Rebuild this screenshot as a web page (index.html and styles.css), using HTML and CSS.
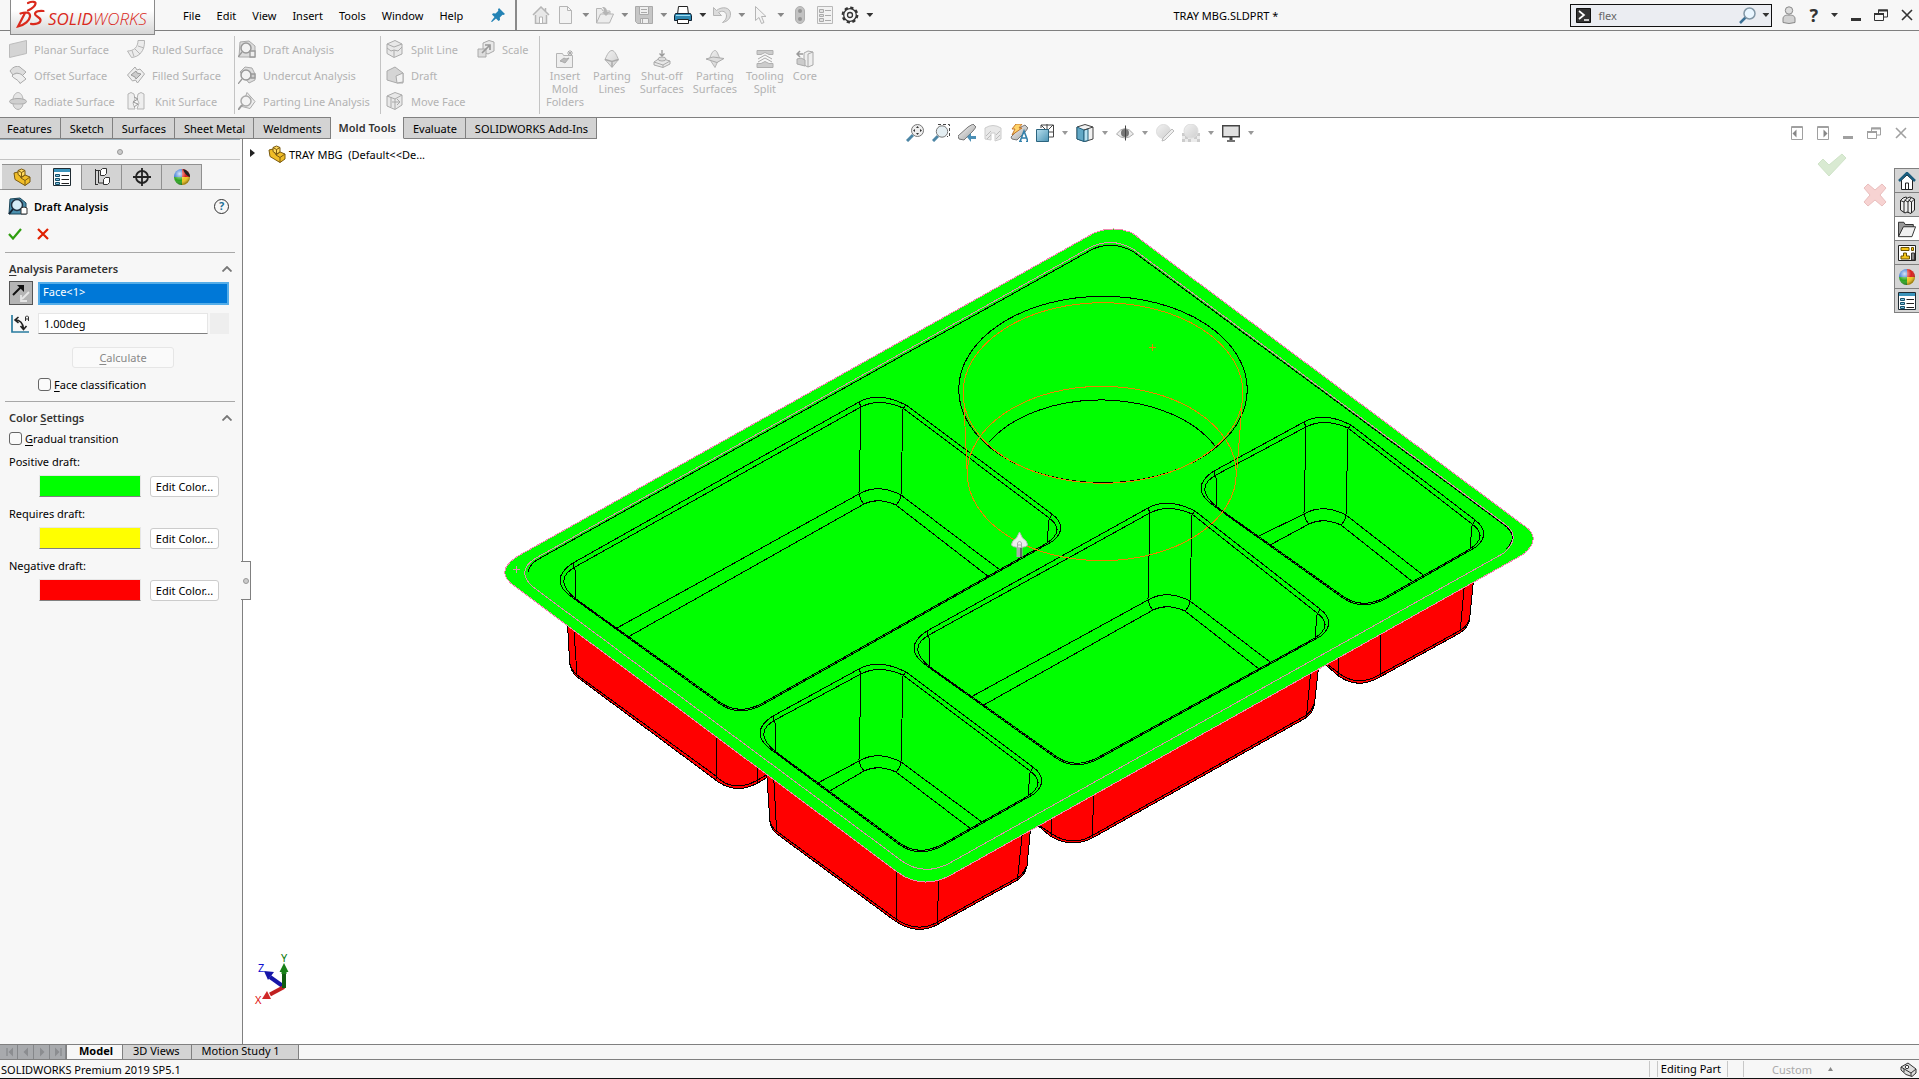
FILE: index.html
```html
<!DOCTYPE html>
<html lang="en">
<head>
  <meta charset="UTF-8">
  <meta name="viewport" content="width=device-width, initial-scale=1.0">
  <title>TRAY MBG.SLDPRT *</title>
  <link rel="stylesheet" href="styles.css">
</head>
<body>

<svg class="defs" aria-hidden="true">
  <defs>
    <linearGradient id="steel" x1="0" y1="0" x2="1" y2="1"><stop offset="0" stop-color="#fff"/><stop offset="1" stop-color="#9a9a9a"/></linearGradient>
    <linearGradient id="blue" x1="0" y1="0" x2="1" y2="1"><stop offset="0" stop-color="#b9e0f0"/><stop offset="1" stop-color="#4d94b4"/></linearGradient>
    <linearGradient id="pale" x1="0" y1="0" x2="1" y2="1"><stop offset="0" stop-color="#f2f2f2"/><stop offset="1" stop-color="#cfcfcf"/></linearGradient>
    <radialGradient id="shine" cx=".35" cy=".3" r=".7"><stop offset="0" stop-color="#fff" stop-opacity=".8"/><stop offset=".6" stop-color="#fff" stop-opacity="0"/><stop offset="1" stop-color="#000" stop-opacity=".35"/></radialGradient>
  </defs>
  <symbol id="part" viewBox="0 0 18 18">
    <path d="M1 5l4-1 3 6 4-3 5 2v5l-5 3.500-10-6z" fill="#f0bd27" stroke="#7a5a10"/>
    <path d="M5 2.500L8.500 1 12 2.500V7L8.500 9 5 6.500z" fill="#ffd95c" stroke="#7a5a10"/>
    <path d="M5 2.500l3.500 2L12 2.500M8.500 4.500V9M8 10l4 2.500L17 9M12 12.500v5" fill="none" stroke="#7a5a10"/>
  </symbol>
  <symbol id="ball" viewBox="0 0 18 18">
    <path d="M9 9V1a8 8 0 0 1 8 8z" fill="#d8201c"/><path d="M9 9H1a8 8 0 0 1 8-8z" fill="#2f72d4"/>
    <path d="M9 9v8a8 8 0 0 1-8-8z" fill="#2da521"/><path d="M9 9h8a8 8 0 0 1-8 8z" fill="#f2c51e"/>
    <circle cx="9" cy="9" r="8" fill="url(#shine)"/>
  </symbol>
  <symbol id="list" viewBox="0 0 18 18">
    <path d="M.5.500h17v17H.5z" fill="#fff" stroke="#1f2b33"/><path d="M1 1h16v3H1z" fill="#3b94bb"/>
    <path d="M2.500 6.500h4v2h-4zM2.500 10.500h4v2h-4zM2.500 14.500h4v2h-4z" fill="#7ec3df" stroke="#16506b"/><path d="M8.500 7.500H16M8.500 11.500H16M8.500 15.500H16" stroke="#222"/>
  </symbol>
  <symbol id="restore" viewBox="0 0 14 12">
    <path d="M4.500 4V1h9v7H10" fill="none" stroke="currentColor"/><path d="M4 1.500h10" stroke="currentColor" stroke-width="2"/>
    <path d="M.5 4.500h9v7h-9z" fill="none" stroke="currentColor"/><path d="M0 5h10" stroke="currentColor" stroke-width="2"/>
  </symbol>
  <symbol id="close" viewBox="0 0 12 12"><path d="M1 1l10 10M11 1L1 11" stroke="currentColor" stroke-width="1.600"/></symbol>
</svg>

<header class="titlebar">
  <div class="logo">
    <svg class="ds" viewBox="0 0 30 28"><g fill="none" stroke="#da291c" stroke-width="2.200" stroke-linecap="round"><path d="M12 3c4-2 8-1.500 7.500.8-.5 2.500-4 5-7.500 6.700"/><path d="M4.500 13.500c6-2 10-1 9.500 3C13.500 20.500 9 25 2 26.500L9 13"/><path d="M27.500 11c-4-.5-8.500.3-8.500 3s6 3 5.500 6.500c-.5 3-5 4-9.500 3.300"/></g></svg>
    <span class="word"><b>SOLID</b>WORKS</span>
  </div>
  <nav class="menu">
    <button>File</button><button>Edit</button><button>View</button><button>Insert</button><button>Tools</button><button>Window</button><button>Help</button>
  </nav>
  <svg class="pin" viewBox="0 0 14 14"><path d="M8 0l6 6-1.500 1-1-.3-2.700 2.800.2 2.500-1.500 1L5 10.500 1 14l-1-.5L3.500 9 1 6.500l1-1.200 2.600.2 2.700-2.700L7 1.500z" fill="#2483b5"/></svg>
  <div class="quickbar">
    <button aria-label="Home"><svg viewBox="0 0 18 18"><path d="M3.500 9v8.500h11V9M1 9l8-8 8 8M13.500 5V2" fill="#e8e8e8" stroke="#b5b5b5" stroke-width="1.500"/><path d="M7.500 17v-6h3v6" fill="#fff" stroke="#b5b5b5"/></svg></button>
    <button aria-label="New"><svg viewBox="0 0 18 18"><path d="M2.500.5h8l4 4v13h-12zM10.500.5v4h4" fill="#f3f3f3" stroke="#b5b5b5"/></svg></button><i class="caret dim"></i>
    <button aria-label="Open"><svg viewBox="0 0 18 18"><path d="M.5 17V2.500h5L7 5h7v3M.5 17l4-9h13l-4 9z" fill="#ececec" stroke="#b5b5b5"/><path d="M6 1c4 0 5 2 5 5h3l-4 4-4-4h2c0-2 0-3-2-5z" fill="#b5b5b5"/></svg></button><i class="caret dim"></i>
    <button aria-label="Save"><svg viewBox="0 0 18 18"><path d="M.5.500h17v17h-15l-2-2z" fill="#c6c6c6" stroke="#aaa"/><path d="M4.500.5h9v8h-9zM5.500 12.500h8v5h-8z" fill="#efefef" stroke="#aaa"/><path d="M6 3.500h6M6 6.500h6M7.500 13v4" stroke="#aaa"/></svg></button><i class="caret dim"></i>
    <button aria-label="Print"><svg viewBox="0 0 18 18"><path d="M4.500.5h9l1 8h-11z" fill="#fff" stroke="#222"/><path d="M1.500 7.500h15l1 2v5H.5v-5z" fill="#2d87b0" stroke="#123"/><path d="M2 9.500h14" stroke="#9ddcf3"/><path d="M3.500 13.500h11v4h-11z" fill="#fff" stroke="#222"/></svg></button><i class="caret"></i>
    <button aria-label="Undo"><svg viewBox="0 0 18 18"><path d="M.5 1.500v8h8l-3-3c4-2.500 8-1 8 3.500 0 3-2 5-4 6.500 5-1 8-4 8-8.500C17.500 1 9 0 3.500 4.500z" fill="#dcdcdc" stroke="#b5b5b5"/></svg></button><i class="caret dim"></i>
    <button aria-label="Select"><svg viewBox="0 0 18 18"><path d="M3.500.5v14l3.500-3 2.500 6 2.500-1-2.500-6H14z" fill="#f4f4f4" stroke="#b5b5b5"/></svg></button><i class="caret dim"></i>
    <button aria-label="Rebuild"><svg viewBox="0 0 18 18"><rect x="4.500" y=".5" width="9" height="17" rx="4.500" fill="#c2c2c2" stroke="#b0b0b0"/><circle cx="9" cy="5" r="2" fill="#949494"/><circle cx="9" cy="13" r="2" fill="#949494"/></svg></button>
    <button aria-label="File properties"><svg viewBox="0 0 18 18"><path d="M1.500.5h15v17h-15z" fill="#f2f2f2" stroke="#b8b8b8"/><path d="M3.500 3.500h4v3h-4zM3.500 8.500h4v2h-4zM3.500 12.500h4v3h-4z" fill="#e0e0e0" stroke="#aaa"/><path d="M9 4.500h6M9 9.500h6M9 14.500h6" stroke="#aaa"/></svg></button>
    <button aria-label="Options"><svg viewBox="0 0 18 18"><circle cx="9" cy="9" r="7.200" fill="none" stroke="#333" stroke-width="2.400" stroke-dasharray="3.200 2.450"/><circle cx="9" cy="9" r="6.300" fill="#f7f7f7" stroke="#333" stroke-width="1.300"/><circle cx="9" cy="9" r="2.500" fill="none" stroke="#333" stroke-width="1.300"/></svg></button><i class="caret"></i>
  </div>
  <div class="doc-title">TRAY MBG.SLDPRT *</div>
  <label class="search">
    <svg viewBox="0 0 15 15"><path d="M.5.500h14v14H.5z" fill="#333" stroke="#111"/><path d="M3 3l5 4-5 4M8 12h5" fill="none" stroke="#fff" stroke-width="1.700"/></svg>
    <input type="text" value="flex" aria-label="Search">
    <svg class="glass" viewBox="0 0 17 17"><path d="M1 16l6-6" stroke="#3b7196" stroke-width="2.500"/><circle cx="10.500" cy="6.500" r="5.500" fill="#eaf6ff" stroke="#8297a6" stroke-width="1.500"/></svg>
    <i class="caret"></i>
  </label>
  <div class="window-controls">
    <button aria-label="Login"><svg class="user" viewBox="0 0 14 18"><path d="M1 16.500V13c0-3 2-4 6-4s6 1 6 4v3.500q-6 2-12 0z" fill="#d2d2d2" stroke="#888"/><circle cx="7" cy="4.500" r="3.700" fill="#ddd" stroke="#888"/></svg></button>
    <button class="help">?</button><i class="caret"></i>
    <button aria-label="Minimize"><span class="min"></span></button>
    <button aria-label="Restore"><svg class="restore"><use href="#restore"/></svg></button>
    <button aria-label="Close"><svg class="close"><use href="#close"/></svg></button>
  </div>
</header>

<section class="ribbon">
  <div class="col col-a">
    <button disabled><svg viewBox="0 0 18 18"><path d="M.5 4.500l17-4v13l-17 4z" fill="#d4d4d4" stroke="#bbb"/></svg>Planar Surface</button>
    <button disabled><svg viewBox="0 0 18 18"><path d="M1 5c3-5 9-6 11-3l5 4-4 4C10 6 5 7 4 9z" fill="#ddd" stroke="#aaa"/><path d="M3 10c3-4 9-3 11 0l3 3-6 4.500C9 13 5 13 3 10z" fill="#eee" stroke="#aaa"/></svg>Offset Surface</button>
    <button disabled><svg viewBox="0 0 18 18"><path d="M4 8c0-5 3-7.500 5-7.500S14 3 14 8z" fill="#e5e5e5" stroke="#b5b5b5"/><ellipse cx="9" cy="9.500" rx="8.500" ry="3" fill="#cfcfcf" stroke="#aaa"/><path d="M4 12c0 3 3 5.500 5 5.500s5-2.500 5-5.500z" fill="#ddd" stroke="#b5b5b5"/></svg>Radiate Surface</button>
  </div>
  <div class="col col-b">
    <button disabled><svg viewBox="0 0 18 18"><path d="M11 .5h6.500C18 11 12 17 4.500 17.500L.5 11C7 11 11 7 11 .5zM11 6l6 2M8 9l5 5M5 10.500l2 6" fill="#ececec" stroke="#b5b5b5"/></svg>Ruled Surface</button>
    <button disabled><svg viewBox="0 0 18 18"><path d="M.5 9L8 1l2 3 3-1 4.500 5-7 9-2-3-3 1z" fill="#eee" stroke="#aaa"/><path d="M4 9l5-4 1 2 4 1-5 5-1-2z" fill="#ccc" stroke="#999"/></svg>Filled Surface</button>
    <button disabled class="knit"><svg viewBox="0 0 18 18"><path d="M1 2q3-3 6 0l1 5-2 4 2 6H1zM17 2q-3-3-6 0l-1 5 2 4-2 6h7z" fill="#eee" stroke="#b5b5b5"/><path d="M7 5l4 2-5 3 5 2-4 3" fill="none" stroke="#999"/></svg>Knit Surface</button>
  </div>
  <div class="col col-c">
    <button disabled><svg viewBox="0 0 18 18"><path d="M2 2l9-1 6 5v11H1z" fill="#ddd" stroke="#aaa"/><circle cx="8" cy="8" r="5" fill="#f3f3f3" stroke="#999" stroke-width="1.500"/><path d="M4 12l-4 5M12 11h5v6h-5z" fill="#eee" stroke="#999" stroke-width="1.300"/></svg>Draft Analysis</button>
    <button disabled><svg viewBox="0 0 18 18"><path d="M2 6l5-5 7 1 3 6v6l-6 3z" fill="#ddd" stroke="#aaa"/><circle cx="8" cy="9" r="5" fill="#f3f3f3" stroke="#999" stroke-width="1.500"/><path d="M4 13l-4 5M13 8h4v4h-4z" fill="#ccc" stroke="#999" stroke-width="1.300"/></svg>Undercut Analysis</button>
    <button disabled><svg viewBox="0 0 18 18"><path d="M9 .5l8 9-5 7-8-2z" fill="#eee" stroke="#aaa"/><circle cx="8" cy="9" r="5" fill="#f3f3f3" stroke="#aaa" stroke-width="1.500"/><path d="M4 13l-4 5" stroke="#999" stroke-width="2"/></svg>Parting Line Analysis</button>
  </div>
  <div class="col col-d">
    <button disabled><svg viewBox="0 0 18 18"><path d="M1 4l8-3.500L16 4v10l-8 3.500-7-4z" fill="#e8e8e8" stroke="#aaa"/><path d="M1 4l7 3 8-3M1 8l4 3 3-1 4 1 4-4M8 10v7" fill="none" stroke="#aaa"/></svg>Split Line</button>
    <button disabled><svg viewBox="0 0 18 18"><path d="M1 5l8-4 8 6v10h-6L1 14z" fill="#d5d5d5" stroke="#aaa"/><path d="M11 17l-1-7 7-3v9z" fill="#f2f2f2" stroke="#aaa"/></svg>Draft</button>
    <button disabled><svg viewBox="0 0 18 18"><path d="M1 4l8-3.500L16 3v10l-7 4.500L1 14z" fill="#e8e8e8" stroke="#aaa"/><path d="M1 4l8 3 7-4M9 7v10M5 5v10M6 10h7M11 7l3 3-3 3" fill="none" stroke="#aaa"/></svg>Move Face</button>
  </div>
  <div class="col col-e">
    <button disabled><svg viewBox="0 0 18 18"><path d="M6 3l6-2.500L17 2v9l-6 3-5-2z" fill="#e8e8e8" stroke="#aaa"/><path d="M1 9h8v8H1z" fill="#ddd" stroke="#aaa"/><path d="M5 13l7-7M8 5h5v5" fill="none" stroke="#999" stroke-width="1.700"/></svg>Scale</button>
  </div>
  <div class="big">
    <button disabled><svg viewBox="0 0 18 18"><path d="M.5 3.500h6l1 2h9v12H.5z" fill="#eee" stroke="#b5b5b5"/><path d="M4 11l4-3 2 1 3-1-4 5-2-1z" fill="#bbb" stroke="#aaa"/><path d="M14 0v6M11 3h6M12 1l4 4M16 1l-4 4" stroke="#aaa"/></svg>Insert<br>Mold<br>Folders</button>
    <button disabled><svg viewBox="0 0 18 18"><path d="M9 .5c3 0 5 6 6.500 9L9 17.500 2 9.500C4 5 6 .5 9 .5z" fill="url(#pale)" stroke="#b5b5b5"/><path d="M2 9.500l7 2 6.500-2M9 12v5" fill="none" stroke="#aaa" stroke-width="1.500"/></svg>Parting<br>Lines</button>
    <button disabled><svg viewBox="0 0 18 18"><path d="M1 12l6-4 10 3v3l-7 3.500L1 15z" fill="#e8e8e8" stroke="#aaa"/><path d="M1 12l9 3 7-4M10 15v2" fill="none" stroke="#aaa"/><ellipse cx="9" cy="9" rx="4" ry="2" fill="#ddd" stroke="#aaa"/><path d="M9 0v5M6.500 3.500L9 6l2.500-2.500" fill="none" stroke="#999" stroke-width="1.300"/></svg>Shut-off<br>Surfaces</button>
    <button disabled><svg viewBox="0 0 18 18"><path d="M9 .5c2 0 3 4 4.500 7L9 17.500 3.500 9C5 4 7 .5 9 .5z" fill="url(#pale)" stroke="#b5b5b5"/><path d="M0 9l7-2 11 1.500-7 4z" fill="#ddd" stroke="#aaa"/></svg>Parting<br>Surfaces</button>
    <button disabled><svg viewBox="0 0 18 18"><path d="M1 .5h16v4h-4l-4-2-4 2H1zM1 17.500h16v-4h-4l-4-2-4 2H1z" fill="#ccc" stroke="#b0b0b0"/><path d="M2 9l7-4 7 4M2 12l7-4 7 4" fill="none" stroke="#aaa"/></svg>Tooling<br>Split</button>
    <button disabled><svg viewBox="0 0 18 18"><path d="M8 3l4-2 5 1v13l-5 2-4-2z" fill="#eee" stroke="#aaa"/><path d="M12 4v13M12 4l5-2" stroke="#aaa"/><path d="M1 9l4-1 4 2v6l-4-1-4-1z" fill="#ccc" stroke="#aaa"/><path d="M7 4H2M4 1L1 4l3 3" fill="none" stroke="#999" stroke-width="1.500"/></svg>Core</button>
  </div>
</section>

<main class="workspace">
  <nav class="command-tabs">
    <button>Features</button><button>Sketch</button><button>Surfaces</button><button>Sheet Metal</button><button>Weldments</button><button class="active">Mold Tools</button><button>Evaluate</button><button>SOLIDWORKS Add-Ins</button>
  </nav>

  <div class="content">
    <aside class="panel">
      <div class="grip"><i class="dot"></i></div>
      <div class="panel-tabs">
        <button aria-label="Feature tree"><svg><use href="#part"/></svg></button>
        <button class="active" aria-label="Property manager"><svg><use href="#list"/></svg></button>
        <button aria-label="Configurations"><svg viewBox="0 0 18 18"><path d="M2.500 1v16M2 2.500h5M5.500 3v12h5M2 16.500h3" fill="none" stroke="#333"/><path d="M7.500 2.500l2-2h4v5l-2 2h-4zM10.500 11.500l2-2h4v5l-2 2h-4z" fill="#fff" stroke="#333"/></svg></button>
        <button aria-label="Dimensions"><svg viewBox="0 0 18 18"><circle cx="9" cy="9" r="6" fill="none" stroke="#222" stroke-width="1.800"/><path d="M9 0v18M0 9h18" stroke="#222" stroke-width="1.800"/></svg></button>
        <button aria-label="Display"><svg viewBox="0 0 18 18"><use href="#ball"/><path d="M10 1c4 1 7 4 7 8-3-1-6-4-7-8z" fill="#222"/></svg></button>
      </div>

      <div class="panel-title">
        <svg viewBox="0 0 20 18"><path d="M2 2l10-1 6 5v11H1z" fill="#4a8fae" stroke="#1b4558"/><circle cx="9" cy="8" r="5.500" fill="#d7edf7" stroke="#234" stroke-width="1.500"/><path d="M5 12l-4 5" stroke="#123" stroke-width="2"/><path d="M13 11l3-1 3 1v6h-6z" fill="#fff" stroke="#333"/></svg>
        <h1>Draft Analysis</h1>
        <button class="about" aria-label="Help">?</button>
      </div>
      <div class="confirm">
        <button aria-label="OK"><svg viewBox="0 0 14 12"><path d="M1 6l4 4.500L13 1" fill="none" stroke="#2f9e0f" stroke-width="2.200"/></svg></button>
        <button aria-label="Cancel"><svg viewBox="0 0 14 12"><path d="M2 1l10 10M12 1L2 11" stroke="#e02000" stroke-width="2.200"/></svg></button>
      </div>

      <section class="group">
        <h2><span><u>A</u>nalysis Parameters</span><svg class="chev" viewBox="0 0 10 6"><path d="M.5 5.500L5 1l4.500 4.500" fill="none" stroke="#777" stroke-width="1.800"/></svg></h2>
        <div class="row">
          <button class="reverse" aria-label="Reverse direction"><svg viewBox="0 0 18 18"><path d="M1 11l8-8" stroke="#111" stroke-width="2"/><path d="M5 1h7v7z" fill="#111"/><path d="M17 8l-7 7M9 11v6h6" fill="none" stroke="#e6e6e6" stroke-width="1.800"/></svg></button>
          <input class="face" type="text" value="Face&lt;1&gt;" aria-label="Pull direction" readonly>
        </div>
        <div class="row angle-row">
          <svg class="angle-icon" viewBox="0 0 18 18"><path d="M1 0v17h17" fill="none" stroke="#2a7ca0" stroke-width="1.700"/><path d="M4 5c5 0 8 3 8.500 9M7.500 2L4 5l3.500 3M9.500 11l3 3.500 3-3.500" fill="none" stroke="#222" stroke-width="1.600"/><path d="M14.500 6V2l1-1h1l1 1v4M14.500 4h3" fill="none" stroke="#333"/></svg>
          <input class="angle" type="text" value="1.00deg" aria-label="Draft angle"><span class="spinner"></span>
        </div>
        <button class="calc" disabled><u>C</u>alculate</button>
        <label class="check inset"><input type="checkbox"><span><u>F</u>ace classification</span></label>
      </section>

      <section class="group">
        <h2><span>Color <u>S</u>ettings</span><svg class="chev" viewBox="0 0 10 6"><path d="M.5 5.500L5 1l4.500 4.500" fill="none" stroke="#777" stroke-width="1.800"/></svg></h2>
        <label class="check"><input type="checkbox"><span><u>G</u>radual transition</span></label>
        <p>Positive draft:</p>
        <div class="color"><span class="swatch positive"></span><button>Edit Color...</button></div>
        <p>Requires draft:</p>
        <div class="color"><span class="swatch requires"></span><button>Edit Color...</button></div>
        <p>Negative draft:</p>
        <div class="color"><span class="swatch negative"></span><button>Edit Color...</button></div>
      </section>
      <div class="handle"><i class="dot"></i></div>
    </aside>

    <div class="viewport">
      <svg class="scene" viewBox="243 139 1676 905">
        <g class="box">
          <path d="M567.700 610V627L569.600 661Q570.500 672 577 677L713 778Q725 788.500 738 788.500Q750 789 766 778V700z"/>
          <path d="M569 662Q571 670 577 675L716 776Q725 786 738 786Q750 786 766 775M573.800 628L577 675M716.600 730V779M757.500 760V783"/>
          <path d="M1038.500 820V826L1050 836Q1073 850 1096 836L1304 719Q1313 714 1314.500 704L1319.400 660z"/>
          <path d="M1040 826L1052 834Q1073 848 1095 834L1304 716.500Q1311 713 1314 704M1051.500 815V836M1093.600 790L1092.500 837M1311.400 665L1306.400 717"/>
          <path d="M1325.900 660V665L1338.600 676Q1358 690 1380 677L1460 633Q1468 628 1469.500 620L1474 575z"/>
          <path d="M1327 664L1340 674Q1358 687 1379 675L1460 630.500Q1466 627 1469 620M1338.600 650V675M1380.200 625V676M1464.800 580L1460.200 631"/>
          <path d="M766.800 760V775L769.900 821Q771 830 777 834L893 919.500Q918 938 942 922L1016 881Q1025 876 1027 866L1031.200 822V800z"/>
          <path d="M770 822Q772 828 777 831.500L894 917.500Q918 935.500 941 920L1016 878.500Q1023 875 1026 867M773.300 770L776.700 832M896.500 865V921M938.600 875L937.500 924M1023.200 825L1017.500 879"/>
        </g>
        <path class="lip" d="M516.800 556.700L1094 233Q1112 225.500 1130 232Q1134 233.500 1141 240L1524 525.500Q1543 538 1523 554.500L950 875.500Q922 890 898 872.500L513 585Q495 571 516.800 556.700z"/>
        <path class="edge" d="M528 572Q529 566 536 560.500L1092 249.500Q1112 240 1133 251.500L1503 524Q1520 536 1506 549"/>
        <path class="lip-inner" d="M536 558L1091 247Q1112 237 1133 249L1505 524Q1522 537 1504 553L948 864Q923 876 902 861L533 587Q515 571 536 558z"/>
        <g id="pockets" class="edge"></g>
        <g class="edge">
          <ellipse cx="1103" cy="389.500" rx="144.300" ry="93.200"/>
          <path d="M989 442A128 83 0 0 1 1215.700 447"/>
        </g>
        <g class="hidden-edge">
          <ellipse cx="1103" cy="393" rx="140" ry="90.300"/>
          <ellipse cx="1101.800" cy="473.500" rx="134.500" ry="87.200"/>
          <path d="M964 405L967.300 475M1242 405L1236.500 475M1149 347.500h7M1152.500 344v7"/>
        </g>
        <path class="lip-inner" d="M513 569.500h7M516.500 566v7"/>
        <g class="pull">
          <path d="M1016.500 546h6v11h-6z" fill="#aaa"/><path d="M1020 547h2v10h-2z" fill="#666"/>
          <path d="M1019.500 532l3 6q5 3 5 7-1 2-4 2-4 1-8 0-3 0-4-2 0-4 5-7z" fill="#eee" stroke="#bbb"/><path d="M1017.500 548v-5l2-2 2 2v5M1017.500 545h4" fill="none" stroke="#aaa"/>
        </g>
        <g class="triad">
          <path d="M284 987L270 977" stroke="#1616a8" stroke-width="4"/><path d="M264 971l10 1-6 8z" fill="#1616a8"/>
          <path d="M284 987L270 994.500" stroke="#c02020" stroke-width="4"/><path d="M262 999l5-8 4 8z" fill="#d02828"/>
          <path d="M284 988V972" stroke="#105c10" stroke-width="4"/><path d="M284 963l4.500 9h-2v2h-5v-2h-2z" fill="#188018"/>
          <text x="281" y="962" fill="#0a7a0a">Y</text><text x="258" y="972" fill="#1010d0">Z</text><text x="255" y="1004" fill="#e01010">X</text>
        </g>
      </svg>
      <div class="tree">
        <i class="arrow"></i><svg><use href="#part"/></svg><span>TRAY MBG&nbsp; (Default&lt;&lt;De...</span>
      </div>
      <div class="corner-ok">
        <svg class="ok" viewBox="0 0 30 24"><path d="M1 11l5-5 6 6L25 1l4 4-17 18z" fill="#d9ead2" stroke="#cfe3c8"/></svg>
        <svg class="cancel" viewBox="0 0 24 24"><path d="M5 1l7 6 7-6 4 4-6 7 6 7-4 4-7-6-7 6-4-4 6-7-6-7z" fill="#f7d3d2" stroke="#e9bfbe"/></svg>
      </div>
      <div class="taskpane">
        <button aria-label="Resources"><svg viewBox="0 0 18 18"><path d="M3.500 8v9.500h11V8L9 3z" fill="#fff" stroke="#222"/><path d="M1 9l8-8 8 8" fill="none" stroke="#1a5d7e" stroke-width="2.500"/><path d="M7.500 17v-6h3v6" fill="none" stroke="#222"/></svg></button>
        <button aria-label="Design library"><svg viewBox="0 0 18 18"><path d="M2.500 4.500L5 2l3-1 1.500 1L12 1l4.500 2v11L13 17.500 9 16l-2 1-4.500-3z" fill="#eee" stroke="#222"/><path d="M2.500 4.500L6 6v10.500M6 6l3-4M6.500 4L10 6v10.500M10 6l3-4M10.500 4L13.500 6v11M13.500 6l3-3" fill="none" stroke="#222"/></svg></button>
        <button class="active" aria-label="File explorer"><svg viewBox="0 0 20 18"><path d="M.5 17V1.500h6L8 4h9v3" fill="#999" stroke="#222"/><path d="M.5 17.500L6 6.500h13.500l-4 11z" fill="#f0f0f0" stroke="#222"/></svg></button>
        <button aria-label="View palette"><svg viewBox="0 0 18 18"><path d="M.5 1.500h17v15H.5z" fill="#fff" stroke="#222"/><path d="M3 3.500h8v3H3zM13.500 3.500h2v3h-2zM5.500 9h3v3h3v3H3v-3h2.500z" fill="#f5c518" stroke="#6b5200"/><path d="M13.500 9h3v7h-3z" fill="#888" stroke="#333"/></svg></button>
        <button aria-label="Appearances"><svg><use href="#ball"/></svg></button>
        <button aria-label="Custom properties"><svg><use href="#list"/></svg></button>
      </div>
    </div>
  </div>

  <div class="overlay-bar">
    <div class="headsup">
      <button aria-label="Zoom to fit"><svg viewBox="0 0 18 18"><path d="M1 17l6-6" stroke="#4d86a5" stroke-width="3"/><circle cx="11.500" cy="6.500" r="6" fill="#eee" stroke="#777"/><path d="M11.500 2l1.500 2h-3zM11.500 11l1.500-2h-3zM7 6.500L9 5v3zM16 6.500L14 5v3z" fill="#333"/></svg></button>
      <button aria-label="Zoom to area"><svg viewBox="0 0 18 18"><path d="M6 .5h11.500v12H15" fill="none" stroke="#444" stroke-dasharray="3 2"/><path d="M1 17l5-5" stroke="#4d86a5" stroke-width="3"/><circle cx="10" cy="7.500" r="5.700" fill="#e4eef2" stroke="#777"/></svg></button>
      <button aria-label="Previous view"><svg viewBox="0 0 18 18"><path d="M0 12l10-9 5-3 3 3-3 4-9 9-5-1z" fill="url(#steel)" stroke="#777"/><path d="M9 13l4-4v3h5v3h-5v3z" fill="#4b8fb5"/></svg></button>
      <button aria-label="Section view"><svg viewBox="0 0 18 18"><path d="M1 4q8-5 16 0v11l-6 2V9H7v7l-6-1z" fill="#e8e8e8" stroke="#ccc"/><path d="M2 12l5-5M3 15l4-4M12 11l4-4M12 15l4-4" stroke="#bbb"/></svg></button>
      <button aria-label="Dynamic annotation"><svg viewBox="0 0 18 18"><path d="M1 13L11 3l4-2 3 3-3 4-8 8-5-1z" fill="url(#steel)" stroke="#777"/><path d="M6 0h6L9 4h3L2 11l3-6H2z" fill="#ffd46a" stroke="#c5772c"/><path d="M10 17.500L14 7l4 10.500M11.500 14h5M9 17.500h3M16 17.500h2" fill="none" stroke="#3380aa" stroke-width="1.600"/></svg></button>
      <button aria-label="View orientation"><svg viewBox="0 0 18 18"><path d="M5 4V1h12.500v12H13M5 1l5 5M17 1l-5 5M11 0v5M13 8h5" fill="none" stroke="#444"/><path d="M.5 5.500h12v12H.5z" fill="url(#blue)" stroke="#2b647f"/></svg></button><i class="caret"></i>
      <button aria-label="Display style"><svg viewBox="0 0 18 18"><path d="M1 3l8-2.500L17 3v12l-8 2.500L1 15z" fill="#f2f2f2" stroke="#444"/><path d="M1 3l7 3v11.500L1 15z" fill="#62a8c6" stroke="#24607c"/><path d="M8 6l4-1v11.500l-4 1z" fill="#b8e2f2" stroke="#24607c"/><path d="M8 6l9-3" stroke="#444"/></svg></button><i class="caret"></i>
      <button aria-label="Hide/show"><svg viewBox="0 0 18 18"><path d="M.5 10q8.500-11 17 0-8.500 8-17 0z" fill="#ececec" stroke="#aaa"/><circle cx="9" cy="9" r="4" fill="#777"/><path d="M9.500 1.500v15" stroke="#444"/></svg></button><i class="caret"></i>
      <button aria-label="Edit appearance"><svg viewBox="0 0 18 18"><circle cx="7.500" cy="7.500" r="7" fill="url(#pale)" stroke="#ddd"/><path d="M16 5l2 2-9 9-3 1 1-3z" fill="#eee" stroke="#bbb"/></svg></button>
      <button aria-label="Apply scene"><svg viewBox="0 0 18 18"><path d="M0 9h18v9H0z" fill="#ececec"/><path d="M0 9h3v3H0zM15 9h3v3h-3zM3 12h3v3H3zM12 12h3v3h-3zM0 15h3v3H0zM6 15h3v3H6zM15 15h3v3h-3z" fill="#ccc"/><circle cx="9" cy="7" r="7" fill="url(#pale)" stroke="#ddd"/></svg></button><i class="caret"></i>
      <button aria-label="View settings"><svg viewBox="0 0 18 18"><path d="M.7 1.700h16.600v11H.7z" fill="#e0e0e0" stroke="#444" stroke-width="1.400"/><path d="M7.500 13h3v3h-3z" fill="#444"/><path d="M5 17h8" stroke="#444" stroke-width="1.500"/></svg></button><i class="caret"></i>
    </div>
    <div class="doc-controls">
      <button aria-label="Collapse left"><svg viewBox="0 0 12 14"><path d="M.5.500h11v13H.5zM0 1.500h12" fill="none" stroke="#a0a0a0"/><path d="M1.500 7.500l4-4v8z" fill="#888"/></svg></button>
      <button aria-label="Collapse right"><svg viewBox="0 0 12 14"><path d="M.5.500h11v13H.5zM0 1.500h12" fill="none" stroke="#a0a0a0"/><path d="M10.500 7.500l-4-4v8z" fill="#888"/></svg></button>
      <button aria-label="Minimize"><span class="min"></span></button>
      <button aria-label="Restore"><svg class="restore"><use href="#restore"/></svg></button>
      <button aria-label="Close"><svg class="close"><use href="#close"/></svg></button>
    </div>
  </div>
</main>

<nav class="sheet-tabs">
  <div class="steps">
    <button aria-label="First"><svg viewBox="0 0 12 12"><path d="M3 2v8" stroke="#7f8184"/><path d="M9 1.500v9L4.500 6z" fill="#8b8d90"/></svg></button>
    <button aria-label="Previous"><svg viewBox="0 0 12 12"><path d="M8 1.500v9L3.500 6z" fill="#8b8d90"/></svg></button>
    <button aria-label="Next"><svg viewBox="0 0 12 12"><path d="M4 1.500v9L8.500 6z" fill="#8b8d90"/></svg></button>
    <button aria-label="Last"><svg viewBox="0 0 12 12"><path d="M9 2v8" stroke="#7f8184"/><path d="M3 1.500v9L7.500 6z" fill="#8b8d90"/></svg></button>
  </div>
  <button class="sheet active">Model</button><button class="sheet">3D Views</button><button class="sheet last">Motion Study 1</button>
</nav>

<footer class="status">
  <span class="version">SOLIDWORKS Premium 2019 SP5.1</span>
  <span class="cell gap-cell"></span>
  <span class="cell">Editing Part</span>
  <span class="cell blank"></span>
  <button class="units">Custom <i class="caret up"></i></button>
  <svg class="tag" viewBox="0 0 17 15"><path d="M1 5l7-4 8 6v4l-4 3.500-6-2L1 8z" fill="#ddd" stroke="#333"/><path d="M1 5l10 6 5-4M11 11v3M4 7v3" fill="none" stroke="#333"/><circle cx="7" cy="5" r="1.700" fill="#fff" stroke="#333"/></svg>
</footer>

<script src="tray.js"></script>
</body>
</html>
```
FILE: styles.css
```css
* {
  box-sizing: border-box;
}

body {
  margin: 0;
  height: 100vh;
  display: flex;
  flex-direction: column;
  overflow: hidden;
  background-color: #f7f7f7;
  color: #000;
  font-family: "Noto Sans", "Open Sans", sans-serif;
  font-size: 11px;
  line-height: 13px;
}

button, input {
  font: inherit;
  color: inherit;
  margin: 0;
}

button {
  padding: 0;
  border: none;
  background: none;
  white-space: nowrap;
}

svg {
  display: block;
  flex: none;
  width: 18px;
  height: 18px;
}

.defs {
  position: absolute;
  width: 0;
  height: 0;
}

u {
  text-underline-offset: 2px;
}

.caret {
  flex: none;
  width: 7px;
  height: 4px;
  background-color: #333;
  clip-path: polygon(0 0, 100% 0, 50% 100%);
}

.caret.dim {
  background-color: #888;
}

.caret.up {
  background-color: #888;
  clip-path: polygon(50% 0, 100% 100%, 0 100%);
}

.dot {
  width: 6px;
  height: 6px;
  border: 1px solid #999;
  border-radius: 50%;
  background-color: #ccc;
}

/* title bar */
.titlebar {
  display: flex;
  align-items: center;
  flex: none;
  height: 31px;
  border-bottom: 1px solid #808080;
}

.logo {
  position: relative;
  z-index: 2;
  align-self: flex-start;
  display: flex;
  align-items: flex-start;
  flex: none;
  width: 145px;
  height: 35px;
  margin-left: 10px;
  padding-left: 5px;
  border: 1px solid #8a8a8a;
  border-top: none;
  background: linear-gradient(#fff 30%, #d6d6d6);
}

.ds {
  width: 30px;
  height: 28px;
}

.word {
  margin-left: 2px;
  padding-top: 9px;
  color: #da291c;
  font-family: "Open Sans", sans-serif;
  font-size: 17px;
  font-style: italic;
  font-weight: 300;
  line-height: 20px;
}

.menu {
  display: flex;
  gap: 16px;
  margin-left: 28px;
}

.pin {
  width: 14px;
  height: 14px;
  margin: 0 10px 0 28px;
}

.quickbar {
  display: flex;
  align-items: center;
  gap: 7px;
  align-self: stretch;
  padding-left: 15px;
  border-left: 2px solid #8a8a8a;
}

.doc-title {
  flex: 1;
  padding-left: 8px;
  text-align: center;
}

.search {
  display: flex;
  align-items: center;
  width: 202px;
  height: 23px;
  padding: 0 2px 0 5px;
  border: 1px solid #111;
  background-color: #ebedf2;
}

.search svg {
  width: 15px;
  height: 15px;
}

.search .glass {
  width: 17px;
  height: 17px;
  margin-right: 6px;
}

.search input {
  flex: 1;
  min-width: 0;
  padding: 0 7px;
  border: none;
  background: none;
  color: #666;
}

.window-controls {
  display: flex;
  align-items: center;
  gap: 13px;
  margin: 0 6px 0 10px;
  color: #333;
}

.window-controls .user {
  width: 14px;
}

.help {
  font-size: 18px;
  font-weight: bold;
  line-height: 20px;
  color: #333;
}

.min {
  display: block;
  width: 10px;
  height: 3px;
  margin-top: 9px;
  background-color: currentColor;
}

.restore {
  width: 14px;
  height: 12px;
}

.close {
  width: 12px;
  height: 12px;
}

/* ribbon */
.ribbon {
  display: flex;
  flex: none;
  height: 86px;
  padding: 5px 0 3px 9px;
}

.col button {
  display: flex;
  align-items: center;
  gap: 7px;
  height: 26px;
}

.ribbon button {
  color: #b3b3b3;
}

.col-a {
  width: 118px;
}

.col-b {
  width: 107px;
}

.col-b .knit {
  gap: 10px;
}

.col-c, .col-d, .big {
  border-left: 1px solid #c4c4c4;
}

.col-c {
  width: 146px;
  padding-left: 3px;
}

.col-d {
  width: 97px;
  padding-left: 5px;
}

.col-e {
  width: 62px;
}

.big {
  display: flex;
  align-items: flex-start;
  gap: 9px;
  padding: 14px 0 0 6px;
}

.big svg {
  margin: 0 auto 1px;
}

/* command tabs and work area */
.workspace {
  position: relative;
  display: flex;
  flex-direction: column;
  flex: 1;
  min-height: 0;
  background-color: #fff;
  border-top: 1px solid #808080;
}

.command-tabs {
  display: flex;
  flex: none;
  align-self: flex-start;
  height: 22px;
  margin-top: -1px;
  border-top: 1px solid #808080;
}

.command-tabs button {
  padding: 0 8px 0 9px;
  border-right: 1px solid #808080;
  border-bottom: 1px solid #808080;
  background-color: #d3d3d3;
}

.command-tabs button:first-child {
  padding: 0 8px 0 7px;
}

.command-tabs .active {
  padding: 0 7px 0 8px;
  margin-top: -1px;
  border-bottom-color: #f7f7f7;
  background-color: #f7f7f7;
  font-weight: 600;
  color: #333;
}

.content {
  display: flex;
  flex: 1;
  min-height: 0;
}

.panel {
  position: relative;
  width: 243px;
  flex: none;
  border-right: 1px solid #808080;
  background-color: #f7f7f7;
}

.grip {
  display: flex;
  align-items: center;
  justify-content: center;
  height: 21px;
  padding-top: 5px;
  margin-right: 2px;
  border-top: 1px solid #9fb3bf;
  border-bottom: 1px solid #c4c4c4;
}

.panel-tabs {
  display: flex;
  height: 30px;
  padding: 4px 0 0 2px;
  margin-right: 2px;
  border-bottom: 1px solid #9a9a9a;
}

.panel-tabs button {
  display: flex;
  align-items: center;
  justify-content: center;
  width: 40px;
  height: 26px;
  border: 1px solid #909090;
  border-left: none;
  background-color: #d3d3d3;
}

.panel-tabs .active {
  border-bottom-color: #f7f7f7;
  background-color: #f7f7f7;
}

.panel-title {
  display: flex;
  align-items: center;
  gap: 6px;
  padding: 7px 13px 0 8px;
}

.panel-title svg {
  width: 20px;
}

h1, h2 {
  flex: 1;
  margin: 0;
  font-size: 11px;
  font-weight: 600;
}

.about {
  width: 15px;
  height: 15px;
  border: 1px solid #333;
  border-radius: 50%;
  color: #1f6f96;
  font-weight: bold;
  line-height: 12px;
}

.confirm {
  display: flex;
  gap: 14px;
  height: 37px;
  padding: 9px 8px;
}

.confirm svg {
  width: 14px;
  height: 12px;
}

.group {
  margin: 0 7px 0 5px;
  padding: 9px 2px 0 4px;
  border-top: 1px solid #a8a8a8;
  height: 149px;
}

h2 {
  display: flex;
  align-items: center;
  justify-content: space-between;
  color: #333;
}

.chev {
  width: 10px;
  height: 6px;
  margin-right: 1px;
}

.row {
  display: flex;
  align-items: center;
  gap: 5px;
  margin: 6px 4px 0 0;
}

.reverse {
  display: flex;
  align-items: center;
  justify-content: center;
  width: 24px;
  height: 24px;
  border: 1px solid #555;
  background-color: #b4b4b4;
}

.face {
  flex: 1;
  min-width: 0;
  height: 23px;
  padding: 0 3px 3px;
  border: 2px solid #55ade8;
  background-color: #0078d7;
  color: #fff;
}

.angle-row {
  margin-top: 8px;
}

.angle-icon {
  margin: 0 4px 0 2px;
}

.angle {
  width: 170px;
  height: 21px;
  padding: 0 5px;
  border: 1px solid #e6e6e6;
  border-bottom-color: #808080;
  background-color: #fff;
}

.spinner {
  flex: 1;
  height: 21px;
  margin-left: -3px;
  background-color: #eee;
}

.calc {
  display: block;
  width: 102px;
  height: 21px;
  margin: 13px 0 0 63px;
  border: 1px solid #e6e6e6;
  border-radius: 3px;
  background-color: #fafafa;
  color: #888;
}

.check {
  display: flex;
  align-items: center;
  gap: 3px;
  margin-top: 8px;
}

.check.inset {
  margin: 10px 0 0 29px;
}

.check input {
  appearance: none;
  width: 13px;
  height: 13px;
  border: 1px solid #666;
  border-radius: 3px;
  background-color: #fafafa;
}

p {
  margin: 10px 0 7px;
}

.color {
  display: flex;
  align-items: center;
  gap: 9px;
  margin-left: 30px;
}

.swatch {
  width: 102px;
  height: 22px;
  border: 1px solid #e6e6e6;
  border-bottom-color: #808080;
}

.positive {
  background-color: #0f0;
}

.requires {
  background-color: #ff0;
}

.negative {
  background-color: #f00;
}

.color button {
  width: 69px;
  height: 21px;
  border: 1px solid #ccc;
  border-radius: 3px;
  background-color: #fff;
}

/* tab on the panel's edge that folds it away */
.handle {
  position: absolute;
  z-index: 2;
  left: 241px;
  top: 422px;
  display: flex;
  align-items: center;
  justify-content: center;
  width: 10px;
  height: 39px;
  border: 1px solid #808080;
  border-left: none;
  background-color: #f7f7f7;
}

/* graphics area */
.viewport {
  position: relative;
  flex: 1;
  min-width: 0;
}

.scene {
  width: 100%;
  height: 100%;
  fill: none;
}

.scene path, .scene ellipse {
  stroke-width: 1;
}

.box path {
  stroke: #000;
  shape-rendering: crispEdges;
}

.box path:nth-child(odd) {
  fill: #f00;
}

.scene .lip {
  fill: #0f0;
  stroke: #f08bb0;
  shape-rendering: crispEdges;
}

.lip-inner {
  stroke: #e08bb0;
  shape-rendering: crispEdges;
}

.edge {
  stroke: #000;
  shape-rendering: crispEdges;
}

.hidden-edge {
  stroke: #f08000;
  shape-rendering: crispEdges;
}

.scene .triad path {
  stroke-width: 4;
}

.triad text {
  font-size: 11px;
}

.tree {
  position: absolute;
  left: 5px;
  top: 6px;
  display: flex;
  align-items: center;
}

.tree .arrow {
  width: 5px;
  height: 8px;
  margin: 0 13px 2px 2px;
  background-color: #222;
  clip-path: polygon(0 0, 100% 50%, 0 100%);
}

.tree span {
  margin-left: 3px;
}

.corner-ok {
  position: absolute;
  right: 32px;
  top: 14px;
  display: flex;
  gap: 16px;
}

.ok {
  width: 30px;
  height: 24px;
}

.cancel {
  width: 24px;
  height: 24px;
  margin-top: 30px;
}

.taskpane {
  position: absolute;
  right: 0;
  top: 29px;
  width: 25px;
  border: 1px solid #808080;
  border-width: 1px 0 0 1px;
}

.taskpane button {
  display: flex;
  align-items: center;
  justify-content: center;
  width: 24px;
  height: 24px;
  border-bottom: 1px solid #808080;
  background-color: #d5d5d5;
}

.taskpane .active {
  background-color: #fff;
}

.overlay-bar {
  position: absolute;
  top: 6px;
  left: 241px;
  right: 0;
  display: flex;
  justify-content: center;
}

.headsup {
  display: flex;
  align-items: center;
  gap: 8px;
}

.headsup .caret {
  width: 6px;
  background-color: #999;
}

.doc-controls {
  position: absolute;
  right: 12px;
  top: 2px;
  display: flex;
  align-items: center;
  gap: 14px;
  color: #a0a0a0;
}

.doc-controls button {
  color: #a0a0a0;
}

.doc-controls button svg:not(.restore):not(.close) {
  width: 12px;
  height: 14px;
}

/* bottom */
.sheet-tabs {
  display: flex;
  flex: none;
  height: 16px;
  border-top: 1px solid #808080;
  border-bottom: 1px solid #808080;
}

.steps {
  display: flex;
  padding-left: 2px;
  border-right: 1px solid #808080;
  background-color: #a8aaad;
}

.steps button {
  display: flex;
  align-items: center;
  justify-content: center;
  width: 16px;
  border-right: 1px solid #85878a;
}

.steps svg {
  width: 12px;
  height: 12px;
}

.sheet {
  padding: 0 11px 2px 10px;
  border-right: 1px solid #808080;
  background-color: #d3d3d3;
  line-height: 12px;
}

.sheet.active {
  padding: 0 9px 2px 12px;
  background-color: #f7f7f7;
  font-weight: bold;
}

.sheet.last {
  padding-right: 18px;
}

.status {
  display: flex;
  align-items: center;
  flex: none;
  height: 19px;
  padding-right: 2px;
  border-bottom: 1px solid #111;
}

.version {
  flex: 1;
  padding-left: 1px;
}

.cell {
  height: 16px;
  padding: 1px 6px 0 3px;
  border-left: 1px solid #c8c8c8;
}

.gap-cell {
  width: 8px;
  padding: 0;
}

.blank {
  width: 17px;
  border-right: 1px solid #c8c8c8;
}

.units {
  display: flex;
  align-items: center;
  gap: 16px;
  margin: 0 67px 0 28px;
  color: #aaa;
}

.units .caret {
  width: 5px;
}

.tag {
  width: 17px;
  height: 15px;
}
```
FILE: tray.js
```js
// Pocket corners: back, right, front, left. Floor ends: upper left/right, lower left/right.
const pockets = [
  { b: [879, 397], r: [1061, 527], f: [740, 711], l: [560, 580], floor: [[617, 628], [1000, 570], [628, 637], [989, 577]] },
  { b: [879, 664], r: [1042, 780], f: [920, 852], l: [760, 733], floor: [[816, 784], [982, 822], [828, 792], [971, 829]] },
  { b: [1168, 503], r: [1329, 622], f: [1076, 765], l: [914, 648], floor: [[971, 697], [1270, 662], [982, 706], [1259, 669]] },
  { b: [1324, 417], r: [1484, 533], f: [1363, 605], l: [1201, 488], floor: [[1259, 536], [1423, 575], [1270, 545], [1413, 582]] }
];

function at(p, dx, dy) {
  return (p[0] + dx) + ' ' + (p[1] + dy);
}

function pocketPath({ b, r, f, l, floor }) {
  return [
    // rim
    `M${at(b, -20, 5)}Q${at(b, -1, -6)} ${at(b, 27, 8)}L${at(r, -9, -13)}Q${at(r, 8, 0)} ${at(r, -8, 14)}`,
    `L${at(f, 22, -6)}Q${at(f, -1, 6)} ${at(f, -20, -7)}L${at(l, 13, 18)}Q${at(l, -13, 0)} ${at(l, 13, -17)}z`,
    // inner rim
    `M${at(b, -20, 11)}Q${at(b, -1, 0)} ${at(b, 24, 11)}L${at(r, -12, -9)}Q${at(r, 5, 3)} ${at(r, -14, 16)}`,
    `L${at(f, 21, -7)}Q${at(f, -1, 4)} ${at(f, -19, -8)}L${at(l, 16, 19)}Q${at(l, -8, 0)} ${at(l, 15, -13)}z`,
    // walls
    `M${at(b, -20, 5)}L${at(b, -18, 10)}L${at(b, -20, 96)}Q${at(b, -19, 103)} ${at(b, -15, 107)}`,
    `M${at(b, 27, 8)}L${at(b, 24, 12)}L${at(b, 22, 98)}Q${at(b, 21, 104)} ${at(b, 17, 108)}`,
    `M${at(l, 13, -17)}L${at(l, 15, -10)}L${at(l, 16, 18)}`,
    `M${at(r, -9, -13)}L${at(r, -12, -7)}L${at(r, -14, 16)}`,
    // floor
    `M${floor[0].join(' ')}L${at(b, -20, 97)}Q${at(b, -1, 86)} ${at(b, 22, 98)}L${floor[1].join(' ')}`,
    `M${floor[2].join(' ')}L${at(b, -15, 107)}Q${at(b, -1, 100)} ${at(b, 17, 108)}L${floor[3].join(' ')}`
  ].join('');
}

const layer = document.getElementById('pockets');
pockets.forEach(pocket => {
  const path = document.createElementNS('http://www.w3.org/2000/svg', 'path');
  path.setAttribute('d', pocketPath(pocket));
  layer.appendChild(path);
});
```
